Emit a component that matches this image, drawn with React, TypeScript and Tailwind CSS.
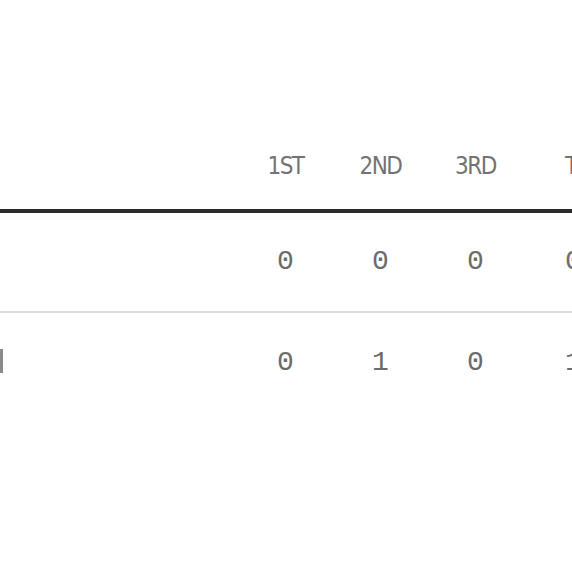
const PERIODS = ['1ST', '2ND', '3RD'];

const ROWS = [
  { id: 'away', scores: [0, 0, 0], total: 0 },
  { id: 'home', scores: [0, 1, 0], total: 1 },
];

const headFont = "font-['DejaVu_Sans_Condensed',sans-serif]";
const numFont = "font-['Liberation_Mono',monospace]";

export default function App() {
  return (
    <div className="w-[572px] h-[572px] overflow-hidden bg-white">
      <div className="w-[680px] pt-[154px]">
        {/* Header */}
        <div className="grid grid-cols-[238px_95px_95px_95px_157px] pb-[31px] border-b-4 border-[#2b2b2b]">
          <div />
          {PERIODS.map((p) => (
            <div
              key={p}
              className={`${headFont} text-center text-[24px] leading-[24px] text-[#737373] font-light tracking-[-1.5px]`}
            >
              {p}
            </div>
          ))}
          <div
            className={`${headFont} pl-[42px] text-[24px] leading-[24px] text-[#737373] font-light tracking-[-1.5px]`}
          >
            TOTAL
          </div>
        </div>

        {/* Rows */}
        {ROWS.map((row, i) => (
          <div
            key={row.id}
            className={`grid grid-cols-[238px_95px_95px_95px_157px] h-[100px] items-center ${
              i < ROWS.length - 1 ? 'border-b-2 border-[#dedede]' : ''
            }`}
          >
            <div className="h-full flex items-center">
              {i === 1 && <div className="w-[3px] h-[24px] bg-[#8a8a8a] -mt-[4px]" />}
            </div>
            {row.scores.map((s, j) => (
              <div key={j} className={`${numFont} text-center text-[28px] leading-[28px] text-[#6b6b6b]`}>
                {s}
              </div>
            ))}
            <div className={`${numFont} pl-[42px] text-[28px] leading-[28px] text-[#6b6b6b]`}>
              {row.total}
            </div>
          </div>
        ))}
      </div>
    </div>
  );
}
